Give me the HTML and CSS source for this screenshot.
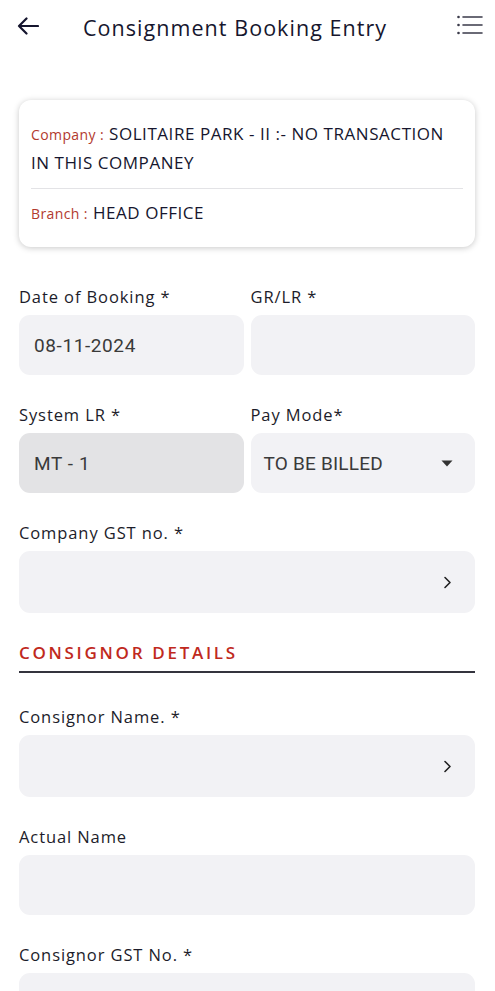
FILE: index.html
```html
<!DOCTYPE html>
<html>
<head>
<meta charset="utf-8">
<link rel="stylesheet" href="styles.css">
</head>
<body>
<header class="topbar">
  <svg class="back" width="22" height="18" viewBox="0 0 22 18"><path d="M21 9H2M9.5 1.5L2 9l7.5 7.5" fill="none" stroke="#15152e" stroke-width="2.2" stroke-linecap="round" stroke-linejoin="round"/></svg>
  <h1 class="title">Consignment Booking Entry</h1>
  <svg class="menu" width="26" height="20" viewBox="0 0 26 20"><g fill="#3a3a4a"><circle cx="1.5" cy="2" r="1.3"/><circle cx="1.5" cy="10" r="1.3"/><circle cx="1.5" cy="18" r="1.3"/></g><g stroke="#3a3a4a" stroke-width="1.6" stroke-linecap="round"><path d="M6 2h19M6 10h19M6 18h19"/></g></svg>
</header>

<main class="content">
  <section class="card">
    <p class="info"><span class="key">Company :</span> SOLITAIRE PARK - II :- NO TRANSACTION IN THIS COMPANEY</p>
    <hr class="divider">
    <p class="info branch"><span class="key">Branch :</span> HEAD OFFICE</p>
  </section>

  <div class="row">
    <div class="group">
      <label class="label">Date of Booking *</label>
      <div class="field"><span class="value">08-11-2024</span></div>
    </div>
    <div class="group">
      <label class="label">GR/LR *</label>
      <div class="field"></div>
    </div>
  </div>

  <div class="row">
    <div class="group">
      <label class="label">System LR *</label>
      <div class="field disabled"><span class="value">MT - 1</span></div>
    </div>
    <div class="group">
      <label class="label">Pay Mode*</label>
      <div class="field select"><span class="value">TO BE BILLED</span><svg width="12" height="7" viewBox="0 0 12 7"><path d="M0.5 0.5h11L6 6.5z" fill="#333"/></svg></div>
    </div>
  </div>

  <div class="group">
    <label class="label">Company GST no. *</label>
    <div class="field tall nav"><svg width="9" height="13" viewBox="0 0 9 13"><path d="M2 1.5L7 6.5l-5 5" fill="none" stroke="#222" stroke-width="1.6" stroke-linecap="round" stroke-linejoin="round"/></svg></div>
  </div>

  <h2 class="section">CONSIGNOR DETAILS</h2>

  <div class="group">
    <label class="label">Consignor Name. *</label>
    <div class="field tall nav"><svg width="9" height="13" viewBox="0 0 9 13"><path d="M2 1.5L7 6.5l-5 5" fill="none" stroke="#222" stroke-width="1.6" stroke-linecap="round" stroke-linejoin="round"/></svg></div>
  </div>

  <div class="group">
    <label class="label">Actual Name</label>
    <div class="field"></div>
  </div>

  <div class="group">
    <label class="label">Consignor GST No. *</label>
    <div class="field"></div>
  </div>
</main>
</body>
</html>
```

FILE: styles.css
```css
* { box-sizing: border-box; }
html, body { margin: 0; padding: 0; background: #fff; overflow: hidden; }
body { font-family: "Open Sans", "Noto Sans", sans-serif; color: #16162e; }

.topbar {
  height: 56px;
  display: flex;
  align-items: center;
  padding: 0 12px 2px 17px;
}
.back { flex: none; margin-top: -2px; }
.title {
  margin: 0 0 0 44px;
  font-size: 21.5px;
  font-weight: 500;
  color: #16162e;
  letter-spacing: 1.05px;
  flex: 1;
  white-space: nowrap;
}
.menu { flex: none; margin-top: -4px; }

.content {
  padding: 44px 20px 0 19px;
  display: flex;
  flex-direction: column;
}

.card {
  background: #fff;
  border-radius: 12px;
  box-shadow: 0 1px 6px rgba(0,0,0,0.22);
  padding: 20px 12px 20px 12px;
  margin-bottom: 38px;
}
.info {
  margin: 0;
  font-size: 17px;
  line-height: 28px;
  font-weight: 500;
  letter-spacing: 0.55px;
  color: #16162e;
}
.key { color: #b23a2e; font-size: 14px; font-weight: 400; letter-spacing: 0.4px; }
.divider {
  border: 0;
  border-top: 1px solid #e3e3e6;
  margin: 11px 0 11px 0;
}
.branch { line-height: 26px; }

.row {
  display: grid;
  grid-template-columns: 1fr 1fr;
  gap: 7px;
}
.group {
  display: flex;
  flex-direction: column;
  margin-bottom: 28px;
}
.label {
  font-size: 16.5px;
  line-height: 24px;
  font-weight: 500;
  letter-spacing: 0.9px;
  color: #1c1c2a;
  margin-bottom: 6px;
}
.field {
  height: 60px;
  background: #f2f2f5;
  border-radius: 11px;
  display: flex;
  align-items: center;
  padding: 0 15px;
}
.field.tall { height: 62px; }
.field.disabled { background: #e3e3e5; }
.value {
  font-family: Roboto, "Liberation Sans", sans-serif;
  font-size: 19px;
  font-weight: 400;
  letter-spacing: 0.6px;
  color: #3a3a3a;
}
.select { justify-content: space-between; padding: 0 22px 0 13px; }
.select .value { letter-spacing: 0.2px; }
.nav { justify-content: flex-end; padding-right: 23px; }

.section {
  margin: 0 0 32px 0;
  padding-bottom: 6px;
  border-bottom: 2.5px solid #34343e;
  font-size: 17px;
  line-height: 24px;
  font-weight: 600;
  letter-spacing: 2.7px;
  color: #c0291d;
}
```
